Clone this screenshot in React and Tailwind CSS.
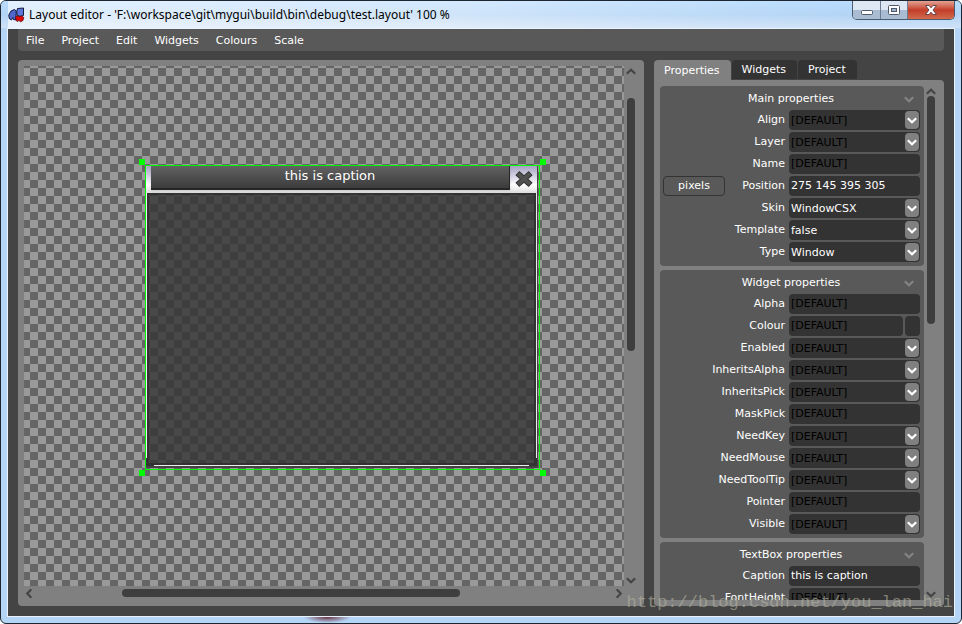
import React from 'react';

const MENU = ["File", "Project", "Edit", "Widgets", "Colours", "Scale"];

const TABS = ["Properties", "Widgets", "Project"];

const GROUPS = [
  {
    title: "Main properties",
    rows: [
      { name: "Align", kind: "combo" },
      { name: "Layer", kind: "combo" },
      { name: "Name", kind: "edit" },
      { name: "Position", kind: "edit", value: "275 145 395 305", unit: "pixels" },
      { name: "Skin", kind: "combo", value: "WindowCSX" },
      { name: "Template", kind: "combo", value: "false" },
      { name: "Type", kind: "combo", value: "Window" },
    ],
  },
  {
    title: "Widget properties",
    rows: [
      { name: "Alpha", kind: "edit" },
      { name: "Colour", kind: "colour" },
      { name: "Enabled", kind: "combo" },
      { name: "InheritsAlpha", kind: "combo" },
      { name: "InheritsPick", kind: "combo" },
      { name: "MaskPick", kind: "edit" },
      { name: "NeedKey", kind: "combo" },
      { name: "NeedMouse", kind: "combo" },
      { name: "NeedToolTip", kind: "combo" },
      { name: "Pointer", kind: "edit" },
      { name: "Visible", kind: "combo" },
    ],
  },
  {
    title: "TextBox properties",
    rows: [
      { name: "Caption", kind: "edit", value: "this is caption" },
      { name: "FontHeight", kind: "edit" },
    ],
  },
];

function Chevron({ className }) {
  return (
    <svg viewBox="0 0 10 7" className={className} fill="none" stroke="currentColor" strokeWidth="2.2">
      <path d="M0.800 1.200 L5 5.200 L9.200 1.200" />
    </svg>
  );
}

function AppIcon() {
  return (
    <svg viewBox="0 0 17 16" className="w-[17px] h-4 shrink-0" aria-hidden="true">
      <path d="M0.800 8 L3 4 L6.500 2.500 L8.200 4 L8 13 L5.500 12.500 L4.800 10.500 L3.500 13 L1.200 11.500 Z" fill="#4f66cc" stroke="#141a40" />
      <path d="M9.500 1.500 L15.500 1 L15.500 8.500 L12 9.500 L9 8 L8.800 4 Z" fill="#5c76dc" stroke="#141a40" />
      <path d="M7.500 9.800 L9.500 8.800 L11.200 9.800 L13.500 8.800 L15.800 10.500 L15 13.500 L12.500 14.800 L11 13.500 L9 14.500 L8 12.500 Z" fill="#e00808" stroke="#500" strokeWidth="0.7" />
    </svg>
  );
}

function TitleBar() {
  return (
    <header className="flex items-start h-[27px] pl-[7px] bg-linear-to-b from-[#b9dcff] via-[#b3d4f5] to-[#cfe2f7]">
      <div className="flex flex-1 items-center h-[27px] gap-1 bg-linear-to-r from-white/60 via-white/40 to-transparent">
        <AppIcon />
        <h1 className="font-['Noto_Sans','Open_Sans',sans-serif] text-[12px] leading-4 text-black whitespace-nowrap">
          Layout editor - 'F:\workspace\git\mygui\build\bin\debug\test.layout' 100 %
        </h1>
      </div>
      <div className="flex h-[19px] mr-1.5 rounded-b-[5px] border border-t-0 border-[#4b5b70] overflow-hidden">
        <button aria-label="Minimize" className="flex items-center justify-center w-7 border-r border-[#6c7c92] bg-linear-to-b from-[#dde7f3] from-50% to-[#a9bcd2] to-50%">
          <svg viewBox="0 0 12 5" className="w-3 h-[5px] mt-1"><rect x="0.500" y="0.500" width="11" height="4" rx="1" fill="#fff" stroke="#4f5a6b" /></svg>
        </button>
        <button aria-label="Maximize" className="flex items-center justify-center w-[27px] border-r border-[#6c7c92] bg-linear-to-b from-[#dde7f3] from-50% to-[#a9bcd2] to-50%">
          <svg viewBox="0 0 12 10" className="w-3 h-2.5">
            <rect x="0.500" y="0.500" width="11" height="9" rx="1" fill="#fff" stroke="#4f5a6b" />
            <rect x="3.500" y="3.500" width="5" height="3" fill="#9fb4cf" stroke="#4f5a6b" />
          </svg>
        </button>
        <button aria-label="Close" className="flex items-center justify-center w-[46px] bg-linear-to-b from-[#e2a193] from-0% via-[#c33c28] via-50% to-[#d06a4c]">
          <svg viewBox="0 0 12 10" className="w-3 h-2.5">
            <path d="M0.500 0.500 H4 L6 2.800 L8 0.500 H11.500 L8 5 L11.500 9.500 H8 L6 7.200 L4 9.500 H0.500 L4 5 Z" fill="#fff" stroke="#553c44" strokeWidth="0.900" />
          </svg>
        </button>
      </div>
    </header>
  );
}

function DesignedWindow() {
  return (
    <section className="absolute left-[121px] top-[99px] w-[395px] h-[305px] border border-[#00ff00] pr-px pb-px">
      <div className="relative flex flex-col h-full border-r border-b-2 border-[#444]">
        <div className="flex h-[27px] pl-[5px] bg-linear-to-b from-[#a6a3c4] via-white via-70% to-[#dcdcdc]">
          <div className="flex-1 h-6 border-b-2 border-r border-[#262626] bg-linear-to-b from-[#626262] to-[#3c3c3c] text-center text-[13px] leading-5 text-white shadow-sm">
            this is caption
          </div>
          <button aria-label="Close window" className="flex items-center justify-center w-[27px] h-[26px]">
            <svg viewBox="0 0 18 18" className="w-[18px] h-[18px]" fill="none" strokeLinecap="square">
              <path d="M4.500 5 L13.500 13 M13.500 5 L4.500 13" stroke="#333" strokeWidth="5.800" />
              <path d="M4.500 5 L13.500 13 M13.500 5 L4.500 13" stroke="#505050" strokeWidth="3.800" />
            </svg>
          </button>
        </div>
        <div className="flex-1 border border-t-0 border-[#eee] bg-[#343434]/80">
          <div className="h-full border-2 border-[#303030]/80"></div>
        </div>
        <i className="absolute left-0 bottom-0 size-2 border-l border-b border-[#333]"></i>
        <i className="absolute right-0 bottom-0 size-2 border-r border-b border-[#333]"></i>
      </div>
      <i className="absolute -left-[7px] -top-[7px] size-1.5 bg-[#00ff00]"></i>
      <i className="absolute -right-[7px] -top-[7px] size-1.5 bg-[#00ff00]"></i>
      <i className="absolute -left-[7px] -bottom-[7px] size-1.5 bg-[#00ff00]"></i>
      <i className="absolute -right-[7px] -bottom-[7px] size-1.5 bg-[#00ff00]"></i>
    </section>
  );
}

function Workspace() {
  return (
    <main className="flex flex-col flex-1 min-w-0 p-1.5 rounded bg-[#808080]">
      <div className="flex flex-1 min-h-0">
        <div className="relative flex-1 overflow-hidden bg-[repeating-conic-gradient(#999_0_25%,#656565_0_50%)] bg-size-[16px_16px] bg-position-[6px_2px]">
          <DesignedWindow />
        </div>
        <div className="flex flex-col items-center w-3.5 text-[#444]">
          <Chevron className="w-2.5 h-[7px] my-0.5 rotate-180 shrink-0" />
          <div className="flex-1 w-2 pt-[21px] pb-[224px]">
            <div className="h-full rounded-full bg-[#3e3e3e]"></div>
          </div>
          <Chevron className="w-2.5 h-[7px] my-0.5 shrink-0" />
        </div>
      </div>
      <div className="flex items-center h-3.5 pr-3.5 text-[#444]">
        <Chevron className="w-2.5 h-[7px] rotate-90 shrink-0" />
        <div className="flex-1 h-2 pl-[88px] pr-[154px]">
          <div className="h-full rounded-full bg-[#3e3e3e]"></div>
        </div>
        <Chevron className="w-2.5 h-[7px] -rotate-90 shrink-0" />
      </div>
    </main>
  );
}

function PropertyField({ id, kind, value }) {
  if (kind === "combo") {
    return (
      <div className="relative w-[131px] h-5 shrink-0">
        <select
          id={id}
          className={`w-full h-5 pt-0.5 pl-0.5 pr-4 rounded appearance-none bg-[#333] leading-[18px] outline-none ${value ? "text-white" : "text-black"}`}
        >
          <option>{value || "[DEFAULT]"}</option>
        </select>
        <span className="absolute right-px top-px flex items-center justify-center w-3.5 h-[18px] pt-px rounded bg-[#808080] text-white pointer-events-none">
          <Chevron className="w-2.5 h-[7px]" />
        </span>
      </div>
    );
  }

  return (
    <div className="flex gap-0.5 w-[131px] h-5 shrink-0">
      <input
        id={id}
        type="text"
        defaultValue={value}
        placeholder="[DEFAULT]"
        className="flex-1 min-w-0 h-5 px-0.5 pb-0.5 rounded bg-[#333] text-white placeholder:text-black outline-none"
      />
      {kind === "colour" && <button aria-label="Pick colour" className="w-[15px] h-5 rounded bg-[#333]"></button>}
    </div>
  );
}

function PropertyGroup({ title, rows }) {
  return (
    <section className="shrink-0 pb-0.5 rounded bg-[#595959]">
      <div className="flex items-center h-6 pl-[18px] pr-2.5">
        <h2 className="flex-1 pt-0.5 text-center">{title}</h2>
        <Chevron className="w-2.5 h-[7px] mt-0.5 text-[#858585]" />
      </div>
      {rows.map((row) => (
        <div key={row.name} className="flex gap-1 h-[22px] pl-[3px] pr-1">
          {row.unit && (
            <button className="w-[62px] h-5 rounded border border-[#333] leading-[18px]">{row.unit}</button>
          )}
          <label htmlFor={`prop-${row.name}`} className="flex-1 text-right leading-5">{row.name}</label>
          <PropertyField id={`prop-${row.name}`} kind={row.kind} value={row.value} />
        </div>
      ))}
    </section>
  );
}

function SidePanel() {
  return (
    <aside className="flex flex-col w-[290px] shrink-0">
      <div role="tablist" className="flex gap-px h-5 shrink-0">
        {TABS.map((tab, i) => (
          <button
            key={tab}
            role="tab"
            aria-selected={i === 0}
            className={`pl-2.5 pr-[11px] rounded-t leading-[19px] ${i === 0 ? "h-5 bg-[#808080]" : "h-[19px] bg-[#333]"}`}
          >
            {tab}
          </button>
        ))}
      </div>
      <div className="flex flex-1 min-h-0 p-1.5 rounded-b rounded-tr bg-[#808080]">
        <div className="flex flex-col flex-1 gap-1 overflow-hidden">
          {GROUPS.map((g) => <PropertyGroup key={g.title} title={g.title} rows={g.rows} />)}
        </div>
        <div className="flex flex-col items-center w-3.5 text-[#444]">
          <Chevron className="w-2.5 h-[7px] mt-0.5 rotate-180 shrink-0" />
          <div className="flex-1 w-2 pt-px pb-[267px]">
            <div className="h-full rounded-full bg-[#3e3e3e]"></div>
          </div>
          <Chevron className="w-2.5 h-[7px] mb-0.5 shrink-0" />
        </div>
      </div>
    </aside>
  );
}

export default function App() {
  return (
    <div className="relative flex flex-col h-screen border border-[#1c2530] rounded-md overflow-hidden bg-[#b5d5f7] font-['DejaVu_Sans',sans-serif] text-[11px] leading-4 text-white">
      <TitleBar />
      <div className="flex flex-col flex-1 min-h-0 mx-1.5 border border-[#e9f3fd] bg-[#444]">
        <nav className="flex gap-[17px] h-[22px] mx-2.5 px-2 shrink-0 rounded-b bg-[#595959] leading-6">
          {MENU.map((m) => <button key={m}>{m}</button>)}
        </nav>
        <div className="flex flex-1 min-h-0 gap-2.5 px-2.5 pt-[9px] pb-2.5">
          <Workspace />
          <SidePanel />
        </div>
      </div>
      <div className="h-1.5 shrink-0 bg-[radial-gradient(ellipse_24px_6px_at_34%_0,#6b3040,transparent)]"></div>
      <p className="absolute right-2 bottom-2 font-['Liberation_Mono',monospace] text-[17px] leading-6 text-[#b4b4a0]/60 pointer-events-none">
        http://blog.csdn.net/you_lan_hai
      </p>
    </div>
  );
}
